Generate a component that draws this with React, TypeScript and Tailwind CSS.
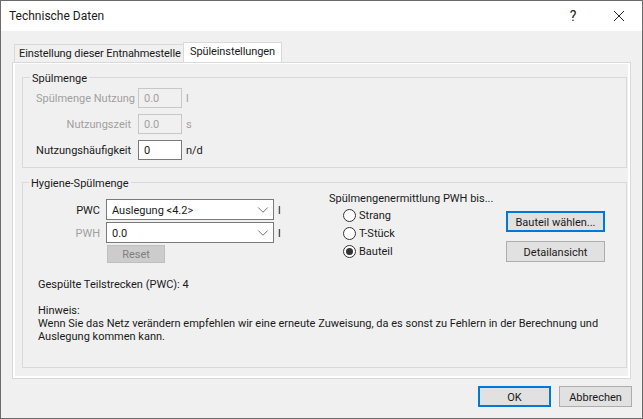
import { ChevronDown } from 'lucide-react'

function Radio({ label, checked }: { label: string; checked?: boolean }) {
  return (
    <div className="flex h-[18px] items-center gap-[3px]">
      <span className="flex h-[13px] w-[13px] items-center justify-center rounded-full border border-[#333] bg-white">
        {checked && <span className="h-[7px] w-[7px] rounded-full bg-[#333]" />}
      </span>
      <span className="pt-[2px]">{label}</span>
    </div>
  )
}

function Combo({ value }: { value: string }) {
  return (
    <div className="flex h-[21px] w-[168px] items-center justify-between border border-[#7a7a7a] bg-white pl-[5px] pr-[1px]">
      <span className="pt-[2px]">{value}</span>
      <ChevronDown className="h-[18px] w-[18px] text-[#555]" strokeWidth={1.1} />
    </div>
  )
}

function ValueRow({ label, value, unit, disabled }: { label: string; value: string; unit: string; disabled?: boolean }) {
  return (
    <div className="flex h-[20px] items-center">
      <span className={`w-[95px] whitespace-nowrap pt-[2px] text-right ${disabled ? 'text-[#a0a0a0]' : ''}`}>{label}</span>
      <div
        className={`ml-[7px] flex h-[20px] w-[44px] items-center border pl-[5px] pt-[2px] ${
          disabled ? 'border-[#c8c8c8] text-[#a0a0a0]' : 'border-[#7a7a7a] bg-white'
        }`}
      >
        {value}
      </div>
      <span className={`ml-[4px] pt-[2px] ${disabled ? 'text-[#a0a0a0]' : ''}`}>{unit}</span>
    </div>
  )
}

export default function App() {
  return (
    <div className="flex h-[419px] w-[643px] flex-col border border-[#6b6b6b] bg-[#f0f0f0] font-['Roboto',sans-serif] text-[11px] leading-[16px] text-[#1a1a1a]">
      <div className="flex h-[30px] shrink-0 items-center justify-between bg-white pl-[8px] text-[12px]">
        <span>Technische Daten</span>
        <div className="flex items-center">
          <span className="w-[46px] text-center text-[14px]">?</span>
          <svg className="mx-[17px] h-[12px] w-[12px]" viewBox="0 0 12 12" fill="none" stroke="#222" strokeWidth="1">
            <path d="M1 1l10 10M11 1L1 11" />
          </svg>
        </div>
      </div>

      <div className="ml-[13px] mt-[11px] flex h-[20px] items-end tracking-[-0.1px]">
        <div className="flex h-[18px] w-[170px] items-center whitespace-nowrap border border-b-0 border-[#d9d9d9] bg-[#f0f0f0] pl-[4px]">
          Einstellung dieser Entnahmestelle
        </div>
        <div className="-ml-px flex h-[20px] w-[99px] items-center justify-center whitespace-nowrap border border-b-0 border-[#d9d9d9] bg-white pb-[2px]">
          Spüleinstellungen
        </div>
      </div>

      <div className="ml-[11px] h-[317px] w-[619px] border border-[#d9d9d9] bg-white pb-[2px] pl-[2px] pr-[2px] pt-px">
        <div className="flex h-full flex-col gap-[6px] bg-[#f0f0f0] pl-[7px] pr-px pt-[5px]">
          <fieldset className="h-[99px] min-w-0 border border-[#d9d9d9] pl-[13px]">
            <legend className="ml-[-6px] h-[16px] px-[2px] pt-[2px]">Spülmenge</legend>
            <div className="flex flex-col gap-[6px] pt-[3px]">
              <ValueRow label="Spülmenge Nutzung" value="0.0" unit="l" disabled />
              <ValueRow label="Nutzungszeit" value="0.0" unit="s" disabled />
              <ValueRow label="Nutzungshäufigkeit" value="0" unit="n/d" />
            </div>
          </fieldset>

          <fieldset className="h-[194px] min-w-0 border border-[#d9d9d9]">
            <legend className="ml-[6px] h-[16px] px-[2px] pt-[2px]">Hygiene-Spülmenge</legend>
            <div className="flex">
              <div className="w-[306px] pt-[9px]">
                <div className="flex h-[21px] items-center">
                  <span className="w-[77px] pt-[2px] text-right">PWC</span>
                  <div className="ml-[6px]"><Combo value="Auslegung <4.2>" /></div>
                  <span className="ml-[4px] pt-[2px]">l</span>
                </div>
                <div className="mt-[2px] flex h-[21px] items-center">
                  <span className="w-[77px] pt-[2px] text-right text-[#a0a0a0]">PWH</span>
                  <div className="ml-[6px]"><Combo value="0.0" /></div>
                  <span className="ml-[4px] pt-[2px]">l</span>
                </div>
                <div className="ml-[84px] mt-[2px] flex h-[18px] w-[58px] items-center justify-center border border-[#bfbfbf] bg-[#cccccc] pt-[2px] text-[#808080]">
                  Reset
                </div>
              </div>
              <div className="w-[177px]">
                <div className="h-[16px] whitespace-nowrap pt-px">Spülmengenermittlung PWH bis...</div>
                <div className="ml-[14px]">
                  <Radio label="Strang" />
                  <Radio label="T-Stück" />
                  <Radio label="Bauteil" checked />
                </div>
              </div>
              <div className="flex flex-col gap-[9px] pt-[21px]">
                <div className="flex h-[21px] w-[99px] items-center justify-center border-2 border-[#0078d7] bg-[#e1e1e1] pt-[2px]">Bauteil wählen...</div>
                <div className="flex h-[21px] w-[99px] items-center justify-center border border-[#adadad] bg-[#e1e1e1] pt-[2px]">Detailansicht</div>
              </div>
            </div>
            <div className="ml-[15px] mt-[14px]">Gespülte Teilstrecken (PWC): 4</div>
            <div className="ml-[15px] mt-[11px] whitespace-nowrap leading-[13px]">
              Hinweis:
              <br />
              Wenn Sie das Netz verändern empfehlen wir eine erneute Zuweisung, da es sonst zu Fehlern in der Berechnung und
              <br />
              Auslegung kommen kann.
            </div>
          </fieldset>
        </div>
      </div>

      <div className="flex flex-1 items-start justify-end gap-[8px] pr-[10px] pt-[7px]">
        <div className="flex h-[21px] w-[73px] items-center justify-center border-2 border-[#0078d7] bg-[#e1e1e1] pt-[2px]">OK</div>
        <div className="flex h-[21px] w-[73px] items-center justify-center border border-[#adadad] bg-[#e1e1e1] pt-[2px]">Abbrechen</div>
      </div>
    </div>
  )
}
